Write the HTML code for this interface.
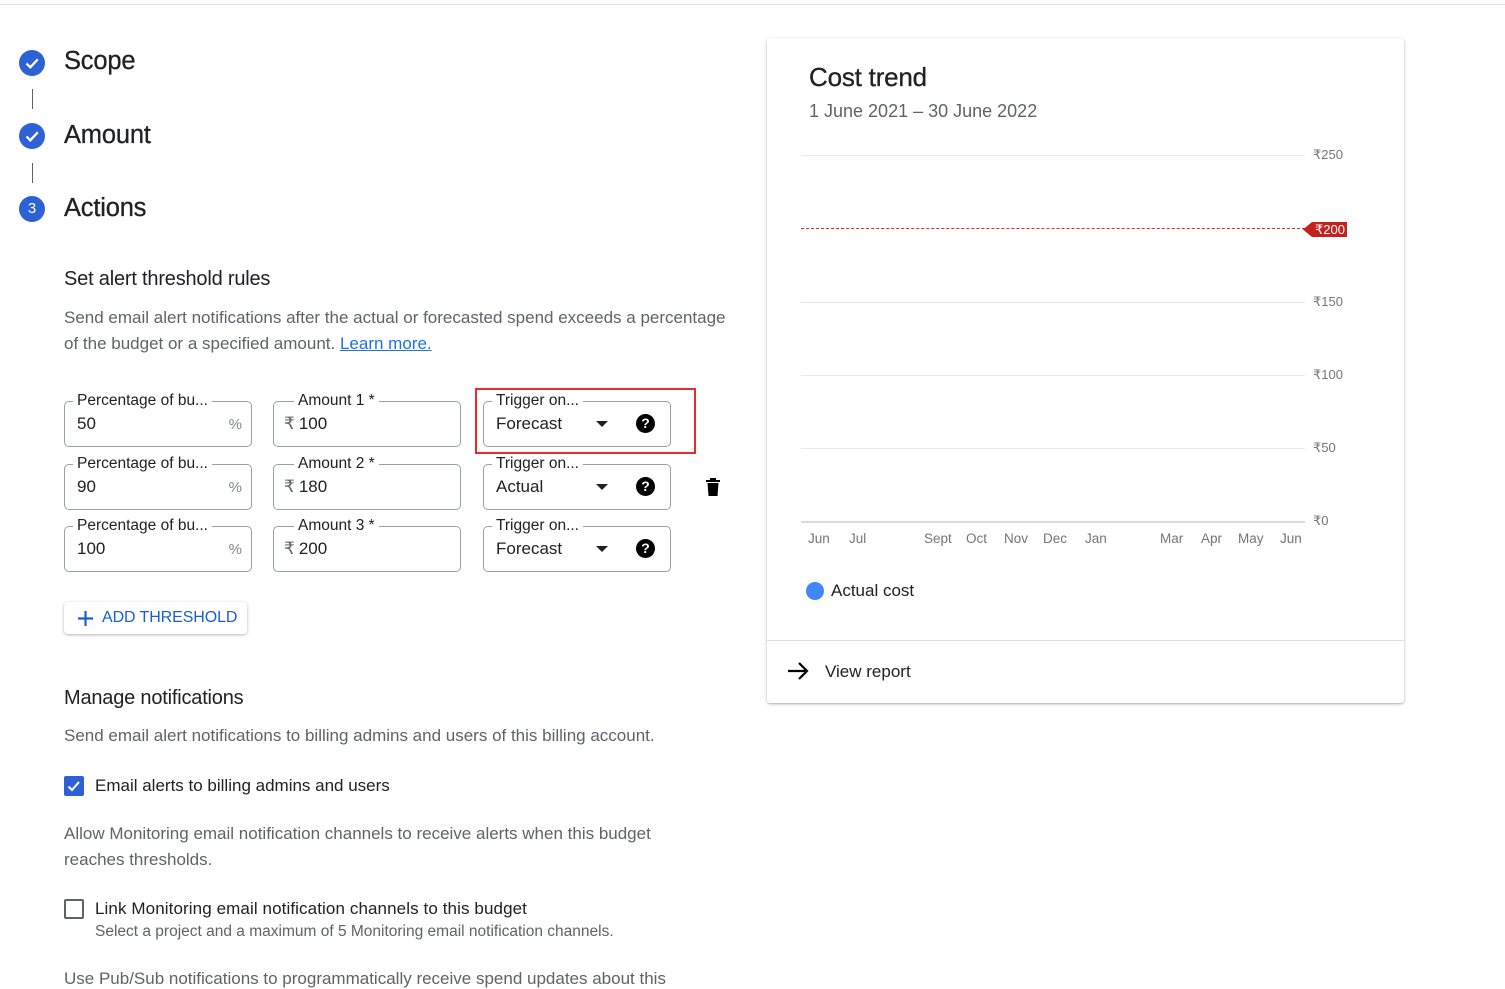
<!DOCTYPE html>
<html><head><meta charset="utf-8"><style>
*{margin:0;padding:0;box-sizing:border-box}
body{width:1505px;height:977px;background:#fff;font-family:"Liberation Sans",sans-serif;color:#202124;position:relative;overflow:hidden}
.a{position:absolute;white-space:nowrap}
.topline{position:absolute;left:0;top:4px;width:1505px;height:1px;background:#e0e0e0}
.circ{position:absolute;width:26px;height:26px;border-radius:50%;background:#2d62d6;color:#fff;font-size:15px;text-align:center;line-height:26px}
.vl{position:absolute;left:32px;width:1px;height:20px;background:#5f6368}
.step{position:absolute;left:64px;font-size:25.5px;letter-spacing:-0.2px;-webkit-text-stroke:0.3px #202124}
.p{font-size:17px;color:#5f6368;letter-spacing:0}
.f{position:absolute;width:188px;height:46px;border:1.2px solid #9aa0a6;border-radius:5px}
.f .l{position:absolute;top:-10px;left:8px;background:#fff;padding:0 4px;font-size:15.5px;line-height:18px;color:#202124}
.f .v{position:absolute;top:12px;left:12px;font-size:17px;color:#202124}
.f .s{position:absolute;top:14px;right:9px;font-size:15px;color:#80868b}
.f .r{color:#5f6368;margin-right:4px}
.tri{position:absolute;left:112px;top:19px;width:0;height:0;border-left:6px solid transparent;border-right:6px solid transparent;border-top:6px solid #202124}
.q{position:absolute;left:152px;top:12px;width:19px;height:19px;border-radius:50%;background:#000;color:#fff;font-size:14px;font-weight:bold;text-align:center;line-height:19px}
.card{position:absolute;left:767px;top:38px;width:637px;height:665px;background:#fff;box-shadow:0 1px 3px rgba(0,0,0,.25),0 1px 1px rgba(0,0,0,.1);border-radius:3px}
.g{position:absolute;left:801px;width:504px;height:1px;background:#e8e8e8}
.yl{position:absolute;left:1313px;font-size:13px;color:#757575}
.m{position:absolute;top:531px;font-size:13.5px;color:#757575}
</style></head><body>
<div class="topline"></div>

<div class="circ" style="left:19px;top:50px"><svg width="26" height="26" viewBox="0 0 26 26"><path d="M7.5 13.5l3.8 3.8 7.5-8" stroke="#fff" stroke-width="2.3" fill="none"/></svg></div>
<div class="vl" style="top:89px"></div>
<div class="circ" style="left:19px;top:123px"><svg width="26" height="26" viewBox="0 0 26 26"><path d="M7.5 13.5l3.8 3.8 7.5-8" stroke="#fff" stroke-width="2.3" fill="none"/></svg></div>
<div class="vl" style="top:163px"></div>
<div class="circ" style="left:19px;top:196px">3</div>
<div class="step" style="top:47px">Scope</div>
<div class="step" style="top:121px">Amount</div>
<div class="step" style="top:194px">Actions</div>

<div class="a" style="left:64px;top:268px;font-size:20px;letter-spacing:-0.2px">Set alert threshold rules</div>
<div class="a p" style="left:64px;top:305px;line-height:26px">Send email alert notifications after the actual or forecasted spend exceeds a percentage<br>of the budget or a specified amount. <span style="color:#1a73e8;text-decoration:underline">Learn more.</span></div>

<!-- row 1 -->
<div class="f" style="left:64px;top:401px"><div class="l">Percentage of bu...</div><div class="v">50</div><div class="s">%</div></div>
<div class="f" style="left:273px;top:401px"><div class="l" style="left:20px">Amount 1 *</div><div class="v" style="left:10px"><span class="r">₹</span>100</div></div>
<div class="f" style="left:483px;top:401px"><div class="l">Trigger on...</div><div class="v">Forecast</div><div class="tri"></div><div class="q">?</div></div>
<div class="a" style="left:475px;top:388px;width:221px;height:66px;border:2px solid #e52b2b"></div>
<!-- row 2 -->
<div class="f" style="left:64px;top:464px"><div class="l">Percentage of bu...</div><div class="v">90</div><div class="s">%</div></div>
<div class="f" style="left:273px;top:464px"><div class="l" style="left:20px">Amount 2 *</div><div class="v" style="left:10px"><span class="r">₹</span>180</div></div>
<div class="f" style="left:483px;top:464px"><div class="l">Trigger on...</div><div class="v">Actual</div><div class="tri"></div><div class="q">?</div></div>
<svg class="a" style="left:705px;top:478px" width="16" height="18" viewBox="0 0 16 18"><path d="M1 2h14v2H1z M5 0h6v2H5z M2.5 5h11l-1 13h-9z" fill="#000"/></svg>
<!-- row 3 -->
<div class="f" style="left:64px;top:526px"><div class="l">Percentage of bu...</div><div class="v">100</div><div class="s">%</div></div>
<div class="f" style="left:273px;top:526px"><div class="l" style="left:20px">Amount 3 *</div><div class="v" style="left:10px"><span class="r">₹</span>200</div></div>
<div class="f" style="left:483px;top:526px"><div class="l">Trigger on...</div><div class="v">Forecast</div><div class="tri"></div><div class="q">?</div></div>

<div class="a" style="left:64px;top:602px;width:183px;height:32px;border-radius:4px;box-shadow:0 1px 3px rgba(0,0,0,.3);background:#fff"></div>
<svg class="a" style="left:77px;top:610px" width="17" height="17" viewBox="0 0 17 17"><path d="M8.5 1v15M1 8.5h15" stroke="#1a5fd0" stroke-width="2.2"/></svg>
<div class="a" style="left:102px;top:609px;font-size:16px;color:#1a5fd0;letter-spacing:-0.1px">ADD THRESHOLD</div>

<div class="a" style="left:64px;top:687px;font-size:20px;letter-spacing:-0.2px">Manage notifications</div>
<div class="a p" style="left:64px;top:726px">Send email alert notifications to billing admins and users of this billing account.</div>
<div class="a" style="left:64px;top:776px;width:20px;height:20px;border-radius:2px;background:#2d62d6"><svg width="20" height="20" viewBox="0 0 20 20"><path d="M4.5 10.5l3.5 3.5 7-8" stroke="#fff" stroke-width="2" fill="none"/></svg></div>
<div class="a" style="left:95px;top:776px;font-size:17px">Email alerts to billing admins and users</div>
<div class="a p" style="left:64px;top:821px;line-height:26px">Allow Monitoring email notification channels to receive alerts when this budget<br>reaches thresholds.</div>
<div class="a" style="left:64px;top:899px;width:20px;height:20px;border-radius:2px;border:2px solid #5f6368"></div>
<div class="a" style="left:95px;top:899px;font-size:17px;letter-spacing:0.1px">Link Monitoring email notification channels to this budget</div>
<div class="a" style="left:95px;top:923px;font-size:15.5px;color:#5f6368">Select a project and a maximum of 5 Monitoring email notification channels.</div>
<div class="a p" style="left:64px;top:969px">Use Pub/Sub notifications to programmatically receive spend updates about this</div>

<!-- card -->
<div class="card"></div>
<div class="a" style="left:809px;top:62px;font-size:26px;letter-spacing:-0.2px;-webkit-text-stroke:0.3px #202124">Cost trend</div>
<div class="a" style="left:809px;top:101px;font-size:18px;color:#5f6368">1 June 2021 – 30 June 2022</div>
<div class="g" style="top:155px"></div><div class="yl" style="top:147px">₹250</div>
<div class="a" style="left:801px;top:228px;width:504px;border-top:1.5px dashed #d93025"></div>
<svg class="a" style="left:1303px;top:221px" width="45" height="17" viewBox="0 0 45 17"><path d="M0 8.5L9 1h35v15H9z" fill="#c5221f"/><text x="12" y="13" font-family="Liberation Sans" font-size="13" fill="#fff">₹200</text></svg>
<div class="g" style="top:302px"></div><div class="yl" style="top:294px">₹150</div>
<div class="g" style="top:375px"></div><div class="yl" style="top:367px">₹100</div>
<div class="g" style="top:448px"></div><div class="yl" style="top:440px">₹50</div>
<div class="g" style="top:521px;background:#dadada;height:2px"></div><div class="yl" style="top:513px">₹0</div>
<div class="m" style="left:808px">Jun</div><div class="m" style="left:849px">Jul</div><div class="m" style="left:924px">Sept</div><div class="m" style="left:966px">Oct</div><div class="m" style="left:1004px">Nov</div><div class="m" style="left:1043px">Dec</div><div class="m" style="left:1085px">Jan</div><div class="m" style="left:1160px">Mar</div><div class="m" style="left:1201px">Apr</div><div class="m" style="left:1238px">May</div><div class="m" style="left:1280px">Jun</div>
<div class="a" style="left:806px;top:582px;width:18px;height:18px;border-radius:50%;background:#4285f4"></div>
<div class="a" style="left:831px;top:581px;font-size:17px">Actual cost</div>
<div class="a" style="left:767px;top:640px;width:637px;height:1px;background:#e0e0e0"></div>
<svg class="a" style="left:787px;top:661px" width="22" height="20" viewBox="0 0 22 20"><path d="M1 10h19M12 2l8 8-8 8" stroke="#000" stroke-width="2.2" fill="none"/></svg>
<div class="a" style="left:825px;top:662px;font-size:17px">View report</div>
</body></html>
